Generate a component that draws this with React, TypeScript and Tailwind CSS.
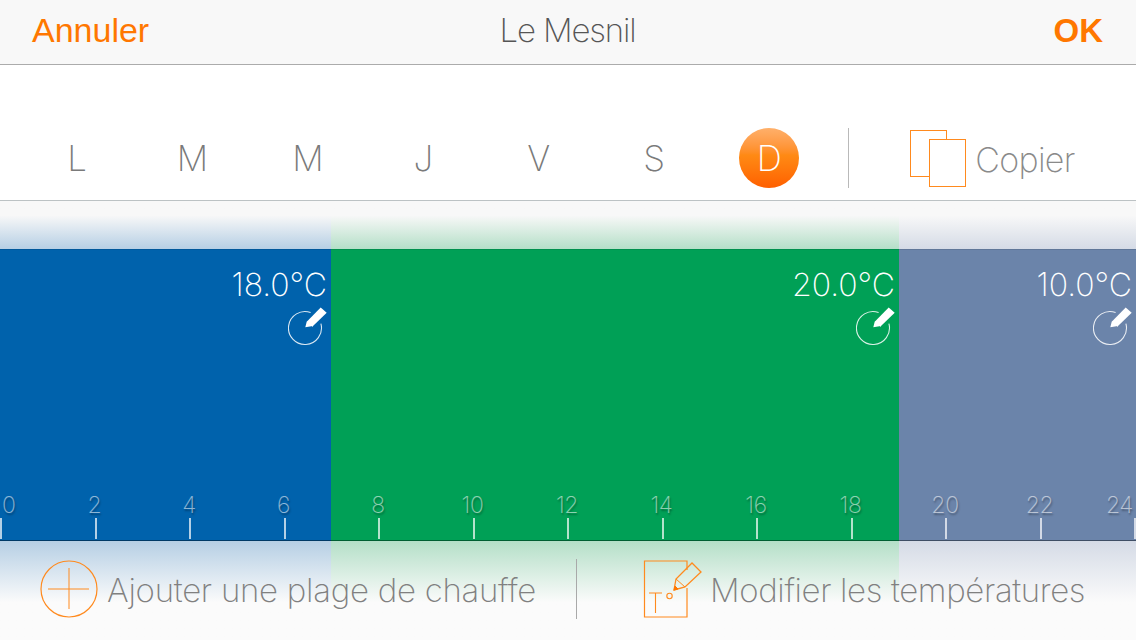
const F = "font-['Inter','Liberation_Sans',sans-serif]";

const days = ["L", "M", "M", "J", "V", "S"];
const hours = ["0", "2", "4", "6", "8", "10", "12", "14", "16", "18", "20", "22", "24"];

function Pencil() {
  return (
    <svg width="40" height="40" viewBox="0 0 40 40" className="block">
      <path d="M32.9 16.7 A16.5 16.5 0 1 1 22.6 5.5" fill="none" stroke="#fff" strokeOpacity="0.85" strokeWidth="1.1" />
      <path d="M17.3 20.3 L18.7 14.7 L32.7 0.6 L38.7 5.7 L25 19 Z" fill="#fff" />
      <path d="M19.5 14.5 L25 19.5" stroke="#fff" strokeWidth="1" fill="none" />
    </svg>
  );
}

function Band({ w, solid, tint, temp, grow }: { w?: string; solid: string; tint: string; temp: string; grow?: boolean }) {
  return (
    <div className={`${w ?? ""} ${grow ? "flex-1" : ""} flex flex-col min-w-0`}>
      <div className={`h-[48px] ${tint} bg-gradient-to-t from-current to-[#f8f8f8] to-[70%]`} />
      <div className={`h-[292px] ${solid} flex flex-col items-end border-t border-t-black/10 border-b border-b-black/40 pr-[4px] pt-[17px]`}>
        <div className={`${F} text-[32px] leading-[36px] font-extralight text-white`}>{temp}</div>
        <div className="mt-[4px] -mr-[1px]">
          <Pencil />
        </div>
      </div>
      <div className={`flex-1 ${tint} bg-gradient-to-b from-current to-[#fbfbfb] to-[62%]`} />
    </div>
  );
}

export default function App() {
  return (
    <div className={`${F} antialiased relative w-[1136px] h-[640px] overflow-hidden bg-white`}>
      <header className="h-[65px] bg-[#f8f8f8] border-b border-[#ababab] grid grid-cols-3 items-center pl-[32px] pr-[33px] pb-[3px]">
        <span className="font-['Liberation_Sans',sans-serif] text-[34px] text-[#ff7700]">Annuler</span>
        <span className={`${F} text-[33px] font-extralight text-[#555] tracking-[-1.15px] text-center`}>Le Mesnil</span>
        <span className="font-['Liberation_Sans',sans-serif] text-[33px] font-bold text-[#ff7700] text-right">OK</span>
      </header>

      <div className="h-[136px] border-b border-[#bcc2c4] pt-[63px] pl-[19px] flex items-start">
        {days.map((d, i) => (
          <div key={i} className="w-[115.4px] h-[60px] flex items-center justify-center text-[35px] font-extralight text-[#7a7a7a] tracking-tight">
            {d}
          </div>
        ))}
        <div className="w-[60px] h-[60px] ml-[28px] rounded-full bg-gradient-to-b from-[#ffb06a] via-[#ff8a14] via-45% to-[#ff5f00] flex items-center justify-center text-[35px] font-extralight text-white">
          D
        </div>
        <div className="w-px h-[60px] bg-[#b9b9b9] ml-[49px]" />
        <svg width="58" height="58" viewBox="0 0 58 58" className="ml-[61px] mt-[2px] shrink-0">
          <rect x="0.5" y="0.5" width="36" height="46" fill="none" stroke="#ff8a1e" />
          <rect x="19.5" y="9.5" width="36" height="47" fill="#fff" stroke="#ff8a1e" />
        </svg>
        <span className="ml-[7px] mt-[2px] text-[34px] leading-[60px] font-extralight text-[#8a8a8a] tracking-[-0.7px]">Copier</span>
      </div>

      <div className="flex h-[439px]">
        <Band w="w-[331px]" solid="bg-[#0062ac]" tint="text-[#b6cfe4]" temp="18.0°C" />
        <Band w="w-[568px]" solid="bg-[#00a056]" tint="text-[#b4dfc8]" temp="20.0°C" />
        <Band grow solid="bg-[#6b84aa]" tint="text-[#d5dbe6]" temp="10.0°C" />
      </div>

      <div className="absolute left-0 top-[493px] w-[1136px] h-[46px] flex justify-between">
        {hours.map((h, i) => (
          <div key={h} className="relative w-[2px] h-full">
            <span
              className={`absolute top-0 leading-[24px] text-[23px] font-extralight text-white/55 [text-shadow:1px_2px_2px_rgba(0,0,0,0.35)] tracking-[-0.4px] ${
                i === 0 ? "left-[2px]" : i === 12 ? "right-[3px]" : "left-[0px] -translate-x-1/2"
              }`}
            >
              {h}
            </span>
            <span className="absolute left-0 bottom-0 h-[21px] w-[2px] bg-white/70" />
          </div>
        ))}
      </div>

      <div className="absolute left-0 top-[541px] w-[1136px] h-[99px] flex items-start">
        <svg width="60" height="60" viewBox="0 0 60 60" className="ml-[39px] mt-[18px] shrink-0">
          <circle cx="30" cy="30" r="28" fill="none" stroke="#ff8a1e" strokeWidth="1.2" />
          <path d="M9 30 H50 M30 9 V50" stroke="#ff8a1e" strokeWidth="1" />
        </svg>
        <span className="ml-[8px] mt-[27px] text-[33px] leading-[44px] font-extralight text-[#808080] tracking-[-0.27px] whitespace-nowrap">
          Ajouter une plage de chauffe
        </span>
        <div className="absolute left-[576px] top-[18px] w-px h-[60px] bg-[#a9a9a9]" />
        <svg width="60" height="60" viewBox="0 0 60 60" className="absolute left-[643px] top-[19px]">
          <path d="M44 10 V1 H1.5 V57 H44 V28" fill="none" stroke="#ff8a1e" strokeWidth="1.2" />
          <path d="M31 30 L33 19 L49 3 L58 12 L42 27 Z" fill="none" stroke="#ff8a1e" strokeWidth="1.3" />
          <path d="M31 30 L32 26 L35 29 Z" fill="#ff7700" stroke="#ff7700" />
          <path d="M33 19 L42 27" stroke="#ff8a1e" />
          <path d="M6 33 H19 M12.5 33 V53" stroke="#ff8a1e" strokeWidth="1.1" fill="none" />
          <circle cx="26.5" cy="36" r="2.7" fill="none" stroke="#ff8a1e" strokeWidth="1.1" />
        </svg>
        <span className="absolute left-[710px] top-[27px] text-[33px] leading-[44px] font-extralight text-[#808080] tracking-[-0.37px] whitespace-nowrap">
          Modifier les températures
        </span>
      </div>
    </div>
  );
}
